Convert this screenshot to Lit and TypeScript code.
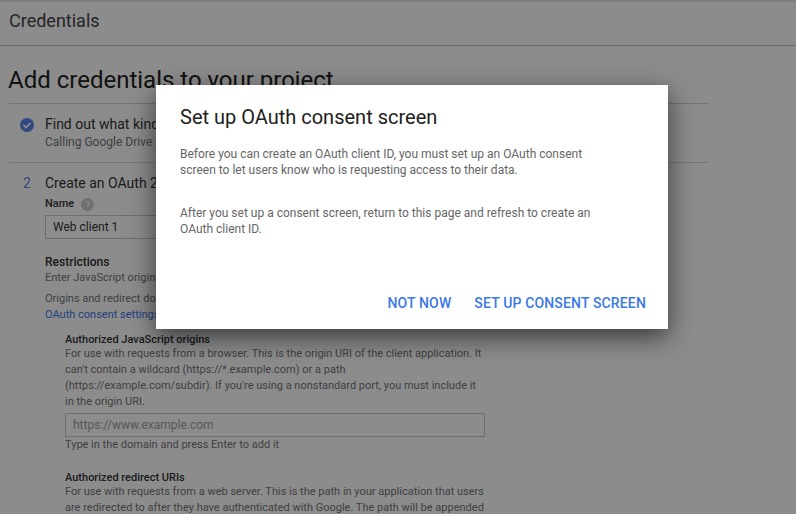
import { css, html, LitElement } from 'lit';
import { customElement } from 'lit/decorators.js';

@customElement('app-root')
export class AppRoot extends LitElement {
  static styles = css`
    :host {
      display: block;
      position: relative;
      width: 796px;
      height: 514px;
      overflow: hidden;
      background: #fff;
      font-family: Roboto, "Liberation Sans", sans-serif;
      font-size: 12px;
      line-height: 16px;
      color: #757575;
    }
    .header {
      height: 46px;
      box-sizing: border-box;
      padding: 9px 9px 0;
      border-bottom: 1px solid #c4c4c4;
      box-shadow: inset 0 3px 3px -2px rgba(0, 0, 0, 0.2);
      font-size: 18px;
      line-height: 24px;
      color: #444;
    }
    .page {
      padding: 0 87px 0 9px;
    }
    h1 {
      margin: 18px 0 0 -1px;
      height: 39px;
      font-size: 24px;
      line-height: 32px;
      font-weight: 400;
      color: #212121;
      white-space: nowrap;
    }
    .step {
      display: flex;
      border-top: 1px solid #d8d8d8;
    }
    .marker {
      width: 36px;
      flex: none;
      padding-left: 11px;
      box-sizing: border-box;
      color: #5a86e8;
      font-size: 14px;
    }
    .step-one {
      height: 59px;
      padding-top: 10px;
      box-sizing: border-box;
    }
    .step-one svg {
      display: block;
      margin-top: 4px;
    }
    .step-title {
      font-size: 14px;
      line-height: 20px;
      color: #333;
      white-space: nowrap;
    }
    .step-two {
      padding-top: 10px;
    }
    .step-two .marker {
      padding-left: 14px;
      line-height: 20px;
    }
    .label {
      display: flex;
      align-items: center;
      gap: 7px;
      margin-top: 3px;
      font-size: 11px;
      font-weight: 500;
      color: #333;
    }
    .input {
      box-sizing: border-box;
      width: 240px;
      height: 24px;
      margin-top: 3px;
      padding-left: 7px;
      border: 1px solid #c8c8c8;
      font-size: 12px;
      line-height: 22px;
      color: #333;
    }
    .heading {
      margin-top: 15px;
      font-weight: 500;
      color: #333;
    }
    .note {
      font-size: 11px;
      white-space: nowrap;
    }
    .step-one .note {
      font-size: 12px;
    }
    .spaced {
      margin-top: 5px;
    }
    a {
      color: #3b78e7;
    }
    .origins {
      width: 420px;
      margin: 10px 0 0 20px;
      font-size: 11px;
    }
    .origins .heading {
      margin-top: 0;
      line-height: 13px;
    }
    .origins .field {
      width: 420px;
      height: 24px;
      box-sizing: border-box;
      margin-top: 3px;
      padding-left: 7px;
      border: 1px solid #c8c8c8;
      font-size: 12px;
      line-height: 22px;
      color: #9e9e9e;
    }
    .origins .redirect {
      margin-top: 18px;
    }
    .scrim {
      position: absolute;
      inset: 0;
      background: rgba(0, 0, 0, 0.45);
    }
    .dialog {
      position: absolute;
      left: 156px;
      top: 85px;
      width: 512px;
      height: 244px;
      box-sizing: border-box;
      padding: 20px 24px 0;
      background: #fff;
      box-shadow: 0 8px 24px rgba(0, 0, 0, 0.6);
    }
    .dialog h2 {
      margin: 0;
      font-size: 20px;
      line-height: 24px;
      font-weight: 400;
      color: #212121;
    }
    .dialog p {
      margin: 0;
      width: 420px;
      color: #666;
    }
    .dialog .first {
      margin-top: 17px;
    }
    .dialog .second {
      margin-top: 27px;
    }
    .actions {
      position: absolute;
      right: 22px;
      bottom: 16px;
      display: flex;
      gap: 23px;
      font-size: 14px;
      line-height: 20px;
      font-weight: 500;
      letter-spacing: 0.15px;
      color: #3b78e7;
    }
  `;

  render() {
    return html`
      <div class="header">Credentials</div>
      <div class="page">
        <h1>Add credentials to your project</h1>
        <div class="step step-one">
          <div class="marker">
            <svg width="14" height="14" viewBox="0 0 14 14">
              <circle cx="7" cy="7" r="7" fill="#5a86e8"></circle>
              <path d="M3.6 7.2l2.4 2.4 4.4-4.6" fill="none" stroke="#fff" stroke-width="1.7"></path>
            </svg>
          </div>
          <div>
            <div class="step-title">Find out what kind of credentials you need</div>
            <div class="note">Calling Google Drive API from a web browser</div>
          </div>
        </div>
        <div class="step step-two">
          <div class="marker">2</div>
          <div>
            <div class="step-title">Create an OAuth 2.0 client ID</div>
            <div class="label">
              Name
              <svg width="13" height="13" viewBox="0 0 13 13">
                <circle cx="6.5" cy="6.5" r="6.5" fill="#ccc"></circle>
                <path d="M4.8 5.1a1.7 1.7 0 1 1 2.7 1.5c-.6.4-1 .8-1 1.4" fill="none" stroke="#fff" stroke-width="1.2"></path>
                <rect x="5.9" y="8.9" width="1.2" height="1.2" fill="#fff"></rect>
              </svg>
            </div>
            <div class="input">Web client 1</div>
            <div class="heading">Restrictions</div>
            <div class="note">Enter JavaScript origins, redirect URIs, or both</div>
            <div class="note spaced">Origins and redirect domains must be added to the list of authorized domains in the</div>
            <div class="note"><a>OAuth consent settings</a></div>
            <div class="origins">
              <div class="heading">Authorized JavaScript origins</div>
              <div>
                For use with requests from a browser. This is the origin URI of the client application. It
                can't contain a wildcard (https://*.example.com) or a path
                (https://example.com/subdir). If you're using a nonstandard port, you must include it
                in the origin URI.
              </div>
              <div class="field">https://www.example.com</div>
              <div>Type in the domain and press Enter to add it</div>
              <div class="heading redirect">Authorized redirect URIs</div>
              <div>
                For use with requests from a web server. This is the path in your application that users
                are redirected to after they have authenticated with Google. The path will be appended
              </div>
            </div>
          </div>
        </div>
      </div>
      <div class="scrim"></div>
      <div class="dialog">
        <h2>Set up OAuth consent screen</h2>
        <p class="first">
          Before you can create an OAuth client ID, you must set up an OAuth consent
          screen to let users know who is requesting access to their data.
        </p>
        <p class="second">
          After you set up a consent screen, return to this page and refresh to create an
          OAuth client ID.
        </p>
        <div class="actions">
          <span>NOT NOW</span>
          <span>SET UP CONSENT SCREEN</span>
        </div>
      </div>
    `;
  }
}
